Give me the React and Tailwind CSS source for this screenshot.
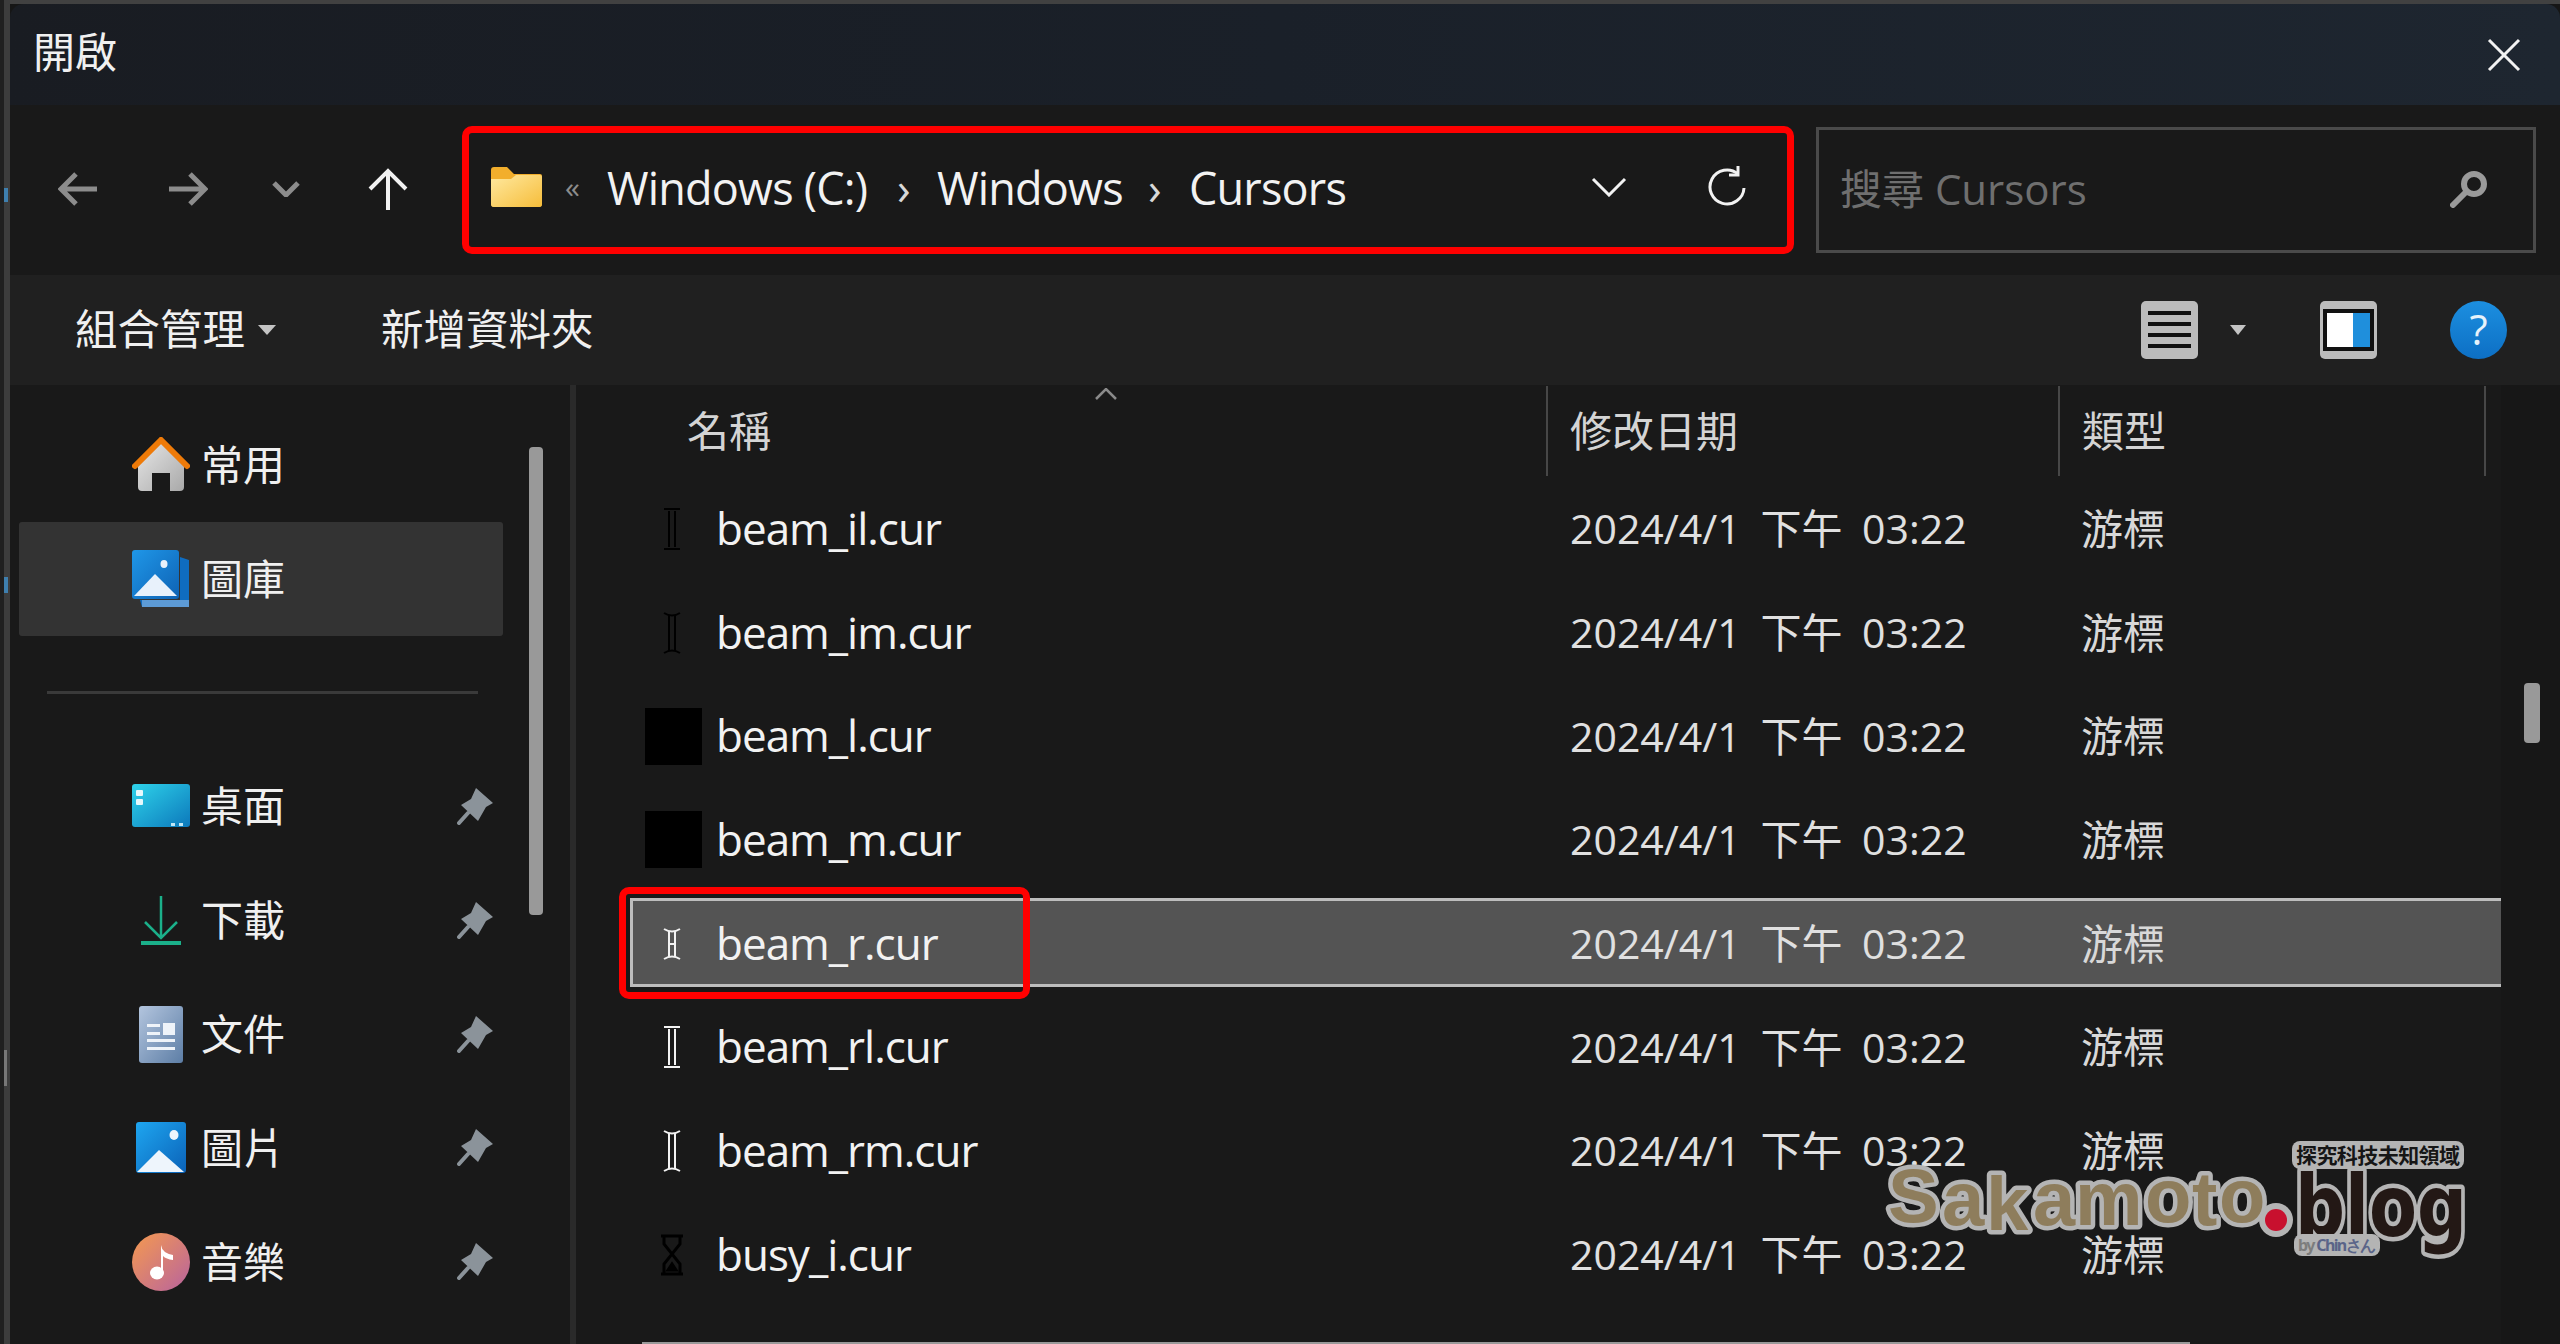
import React from 'react';

const FONT = "[font-family:'Open_Sans','Noto_Sans_CJK_TC',sans-serif]";

const files = [
  { name: 'beam_il.cur', cursor: 'il' },
  { name: 'beam_im.cur', cursor: 'im' },
  { name: 'beam_l.cur', cursor: 'box' },
  { name: 'beam_m.cur', cursor: 'box' },
  { name: 'beam_r.cur', cursor: 'r', selected: true },
  { name: 'beam_rl.cur', cursor: 'rl' },
  { name: 'beam_rm.cur', cursor: 'rm' },
  { name: 'busy_i.cur', cursor: 'busy' },
];

const Pin = () => (
  <svg width="37" height="37" viewBox="0 0 37 37" className="ml-auto mr-[9px]">
    <path d="M19 0 L36 15 L29 19 L21 33 L4 17 L14 11 Z" fill="#8b939a" strokeLinejoin="round" />
    <path d="M11 25 L2 35" stroke="#8b939a" strokeWidth="4" strokeLinecap="round" />
  </svg>
);

const HomeIcon = () => (
  <svg width="58" height="56" viewBox="0 0 58 56">
    <defs>
      <linearGradient id="homeBody" x1="0" y1="0" x2="1" y2="1">
        <stop offset="0" stopColor="#e6e6e6" />
        <stop offset="1" stopColor="#a9a9a9" />
      </linearGradient>
    </defs>
    <path d="M6 28 L29 6 L52 28 V50 Q52 54 48 54 H38 V36 H20 V54 H10 Q6 54 6 50 Z" fill="url(#homeBody)" />
    <path d="M3 29 L29 3 L55 29" fill="none" stroke="#ee7a08" strokeWidth="6" strokeLinejoin="round" strokeLinecap="round" />
  </svg>
);

const LibraryIcon = () => (
  <svg width="58" height="58" viewBox="0 0 58 58">
    <defs>
      <linearGradient id="libBlue" x1="0" y1="0" x2="1" y2="1">
        <stop offset="0" stopColor="#1f97e8" />
        <stop offset="1" stopColor="#0e62b4" />
      </linearGradient>
    </defs>
    <path d="M48 7 L57 10 V57 H10 L8 50 H48 Z" fill="#0f6cc0" />
    <path d="M10 50 H57 V57 H10 Z" fill="#5d9bd6" />
    <rect x="0" y="0" width="47" height="49" rx="3" fill="url(#libBlue)" />
    <path d="M2 46 L23 24 L45 46 Z" fill="#e8f1fb" />
    <ellipse cx="32" cy="14" rx="3.5" ry="4" fill="#e8f1fb" />
  </svg>
);

const DesktopIcon = () => (
  <svg width="58" height="44" viewBox="0 0 58 44">
    <defs>
      <linearGradient id="deskBlue" x1="0" y1="0" x2="1" y2="1">
        <stop offset="0" stopColor="#2ed3ea" />
        <stop offset="1" stopColor="#0c78bb" />
      </linearGradient>
    </defs>
    <rect width="58" height="43" rx="3" fill="url(#deskBlue)" />
    <rect x="4" y="6" width="7" height="6" rx="1" fill="#e6f8fc" />
    <rect x="4" y="15" width="7" height="6" rx="1" fill="#e6f8fc" />
    <rect x="39" y="39" width="4" height="3" fill="#bfe6f5" />
    <rect x="47" y="39" width="4" height="3" fill="#bfe6f5" />
  </svg>
);

const DownloadIcon = () => (
  <svg width="58" height="50" viewBox="0 0 58 50">
    <path d="M29 1 V43 M13 27 L29 43 L45 27" fill="none" stroke="#1bb08a" strokeWidth="2.5" />
    <rect x="9" y="46" width="40" height="4" fill="#1bb08a" />
  </svg>
);

const DocumentIcon = () => (
  <svg width="58" height="57" viewBox="0 0 58 57">
    <defs>
      <linearGradient id="docBlue" x1="0" y1="0" x2="1" y2="1">
        <stop offset="0" stopColor="#b3c5de" />
        <stop offset="1" stopColor="#5d7ea6" />
      </linearGradient>
    </defs>
    <rect x="7" y="0" width="44" height="57" rx="3" fill="url(#docBlue)" />
    <path d="M15 18 H28 V21 H15 Z M15 26 H28 V29 H15 Z M15 33 H43 V36 H15 Z M15 41 H43 V44 H15 Z" fill="#eef3f9" />
    <rect x="31" y="17" width="12" height="12" fill="#eef3f9" />
  </svg>
);

const PicturesIcon = () => (
  <svg width="58" height="51" viewBox="0 0 58 51">
    <defs>
      <linearGradient id="picBlue" x1="0" y1="0" x2="1" y2="1">
        <stop offset="0" stopColor="#1ea6f0" />
        <stop offset="1" stopColor="#0b62b8" />
      </linearGradient>
    </defs>
    <rect x="4" y="0" width="50" height="51" rx="3" fill="url(#picBlue)" />
    <path d="M5 50 L27 28 L52 50 Z" fill="#eef5fc" />
    <ellipse cx="42" cy="13" rx="4.5" ry="5" fill="#eef5fc" />
  </svg>
);

const MusicIcon = () => (
  <svg width="58" height="58" viewBox="0 0 58 58">
    <defs>
      <linearGradient id="musicFill" x1="0" y1="0" x2="1" y2="1">
        <stop offset="0" stopColor="#f59a4f" />
        <stop offset="1" stopColor="#b8639e" />
      </linearGradient>
    </defs>
    <circle cx="29" cy="29" r="29" fill="url(#musicFill)" />
    <ellipse cx="25" cy="40" rx="7" ry="6.5" fill="#fff" />
    <path d="M29 40 V12 Q30 20 41 22 V27 Q34 26 31 23 V40 Z" fill="#fff" />
  </svg>
);

const sidebarTop = [
  { label: '常用', icon: <HomeIcon /> },
  { label: '圖庫', icon: <LibraryIcon />, active: true },
];

const sidebarPinned = [
  { label: '桌面', icon: <DesktopIcon /> },
  { label: '下載', icon: <DownloadIcon /> },
  { label: '文件', icon: <DocumentIcon /> },
  { label: '圖片', icon: <PicturesIcon /> },
  { label: '音樂', icon: <MusicIcon /> },
];

const NavRow = ({ label, icon, active, pinned }) => (
  <div className={`flex items-center h-[113.8px] mx-[9px] pl-[113px] w-[484px] rounded-[3px] ${active ? 'bg-[#333333]' : ''}`}>
    <span className="flex w-[58px] justify-center">{icon}</span>
    <span className="ml-[11px] text-[42px] leading-none text-[#f0f0f0]">{label}</span>
    {pinned && <Pin />}
  </div>
);

// the .cur previews: mostly black glyphs on the dark list, white outlined for the r set
const CursorIcon = ({ kind }) => {
  if (kind === 'box') return <div className="w-[57px] h-[57px] bg-black" />;
  if (kind === 'busy') {
    return (
      <svg className="mr-[4px]" width="24" height="42" viewBox="0 0 24 42" fill="none" stroke="#000" strokeWidth="3">
        <path d="M1 2 H23 M1 40 H23 M4 2 V10 L20 30 V40 M20 2 V10 L4 30 V40" />
        <path d="M8 36 L12 30 L16 36 Z" fill="#000" />
      </svg>
    );
  }
  const light = kind === 'r' || kind === 'rl' || kind === 'rm';
  const color = light ? '#f2f2f2' : '#000';
  const small = kind === 'r';
  const h = small ? 34 : 44;
  const round = kind === 'im' || kind === 'rm' || kind === 'r';
  return (
    <svg className="mr-[4px]" width="20" height={h} viewBox={`0 0 20 ${h}`} fill="none" stroke={color} strokeWidth="2">
      <path d={`M2 2 ${round ? 'Q10 7 18 2' : 'H18'} M2 ${h - 2} ${round ? `Q10 ${h - 7} 18 ${h - 2}` : `H18`}`} />
      <path d={`M7 4 V${h - 4} M13 4 V${h - 4}`} />
      {small && <path d="M7 17 H13" />}
    </svg>
  );
};

const FileRow = ({ file }) => (
  <div className="relative flex items-center h-[103.7px] text-[42px]">
    {file.selected && (
      <>
        <div className="absolute left-[54px] right-0 top-[6px] bottom-[8px] bg-[#545454] border-[3px] border-[#bdbdbd] border-r-0" />
        <div className="absolute left-[43px] top-[-5px] w-[411px] h-[112px] border-[7px] border-[#f00] rounded-[10px]" />
      </>
    )}
    <div className="relative flex items-center w-[994px] pl-[69px]">
      <span className="flex w-[57px] justify-center">
        <CursorIcon kind={file.cursor} />
      </span>
      <span className="ml-[14px] pb-[2px] text-[44px] tracking-[-1px] leading-none text-[#f2f2f2]">{file.name}</span>
    </div>
    <div className="relative w-[512px] text-[41px] [word-spacing:9px] text-[#e0e0e0] leading-none">2024/4/1 下午 03:22</div>
    <div className="relative -ml-px text-[#d8d8d8] leading-none">游標</div>
  </div>
);

const Watermark = () => (
  <svg width="620" height="140" viewBox="0 0 620 140" className="absolute left-[1870px] top-[1130px]">
    <g style={{ paintOrder: 'stroke' }} strokeLinejoin="round">
      <text
        x="18 72 116 163 205 275 322 349"
        y="92 95 100 95 95 92 95 92"
        fontFamily="Liberation Sans"
        fontWeight="700"
        fontSize="76"
        fill="#8e7d5c"
        stroke="#b4b4b4"
        strokeWidth="9"
      >
        Sakamoto
      </text>
      <circle cx="406" cy="90" r="17" fill="#b4b4b4" />
      <circle cx="406" cy="90" r="11" fill="#c8102e" />
      <text x="425" y="106" fontFamily="DejaVu Sans" fontWeight="700" fontSize="86" textLength="172" lengthAdjust="spacingAndGlyphs" fill="#231815" stroke="#b4b4b4" strokeWidth="9">
        blog
      </text>
      <rect x="422" y="11" width="172" height="28" rx="8" fill="#b4b4b4" />
      <text x="426" y="33" fontFamily="Noto Sans CJK TC" fontWeight="700" fontSize="21" textLength="164" fill="#161616">
        探究科技未知領域
      </text>
      <rect x="424" y="104" width="86" height="22" rx="8" fill="#b4b4b4" />
      <text x="428" y="121" fontFamily="Noto Sans" fontWeight="700" fontSize="16" textLength="78" fill="#5a6488">
        <tspan fill="#7d7d7d">by </tspan>Chinさん
      </text>
    </g>
  </svg>
);

export default function App() {
  return (
    <div className={`relative flex w-[2560px] h-[1344px] overflow-hidden bg-[#161616] ${FONT}`}>
      {/* sliver of the window behind */}
      <div className="w-[4px] bg-[#202020]" />
      <div className="w-[6px] bg-[#3d3d3d]">
        <div className="mt-[188px] h-[14px] w-[4px] bg-[#3f7fae]" />
        <div className="mt-[375px] h-[16px] w-[4px] bg-[#3f7fae]" />
        <div className="mt-[457px] h-[36px] w-[3px] bg-[#777777]" />
      </div>

      <div className="flex flex-col flex-1 min-w-0">
        <div className="h-[4px] bg-[#414141]" />
        {/* title bar */}
        <div className="flex items-center justify-between h-[101px] pl-[23px] pr-[39px] rounded-t-[14px] bg-gradient-to-r from-[#191c22] via-[#1a2029] to-[#1e2630]">
          <span className="pb-[6px] text-[42px] leading-none text-[#f0f0f0]">開啟</span>
          <svg width="34" height="34" viewBox="0 0 34 34" stroke="#f2f2f2" strokeWidth="3">
            <path d="M2 2 L32 32 M32 2 L2 32" />
          </svg>
        </div>

        {/* address row */}
        <div className="flex items-center h-[170px] bg-[#191919]">
          <div className="flex items-center w-[452px] pb-[2px]">
            <svg className="ml-[48px]" width="40" height="34" viewBox="0 0 40 34" fill="none" stroke="#8c8c8c" strokeWidth="5">
              <path d="M39 17 H4 M18 2 L3 17 L18 32" />
            </svg>
            <svg className="ml-[70px]" width="40" height="34" viewBox="0 0 40 34" fill="none" stroke="#8c8c8c" strokeWidth="5">
              <path d="M1 17 H36 M22 2 L37 17 L22 32" />
            </svg>
            <svg className="ml-[64px]" width="28" height="16" viewBox="0 0 28 16" fill="none" stroke="#8c8c8c" strokeWidth="5">
              <path d="M2 2 L14 14 L26 2" />
            </svg>
            <svg className="ml-[68px]" width="40" height="42" viewBox="0 0 40 42" fill="none" stroke="#f2f2f2" strokeWidth="4">
              <path d="M20 42 V3 M2 21 L20 3 L38 21" />
            </svg>
          </div>
          <div className="flex items-center w-[1332px] h-[128px] pb-[6px] border-[7px] border-[#f00] rounded-[10px] text-[45px] tracking-[-0.8px] text-[#f2f2f2] leading-none">
            <svg className="ml-[22px]" width="51" height="40" viewBox="0 0 51 40">
              <defs>
                <linearGradient id="folderFill" x1="0" y1="0" x2="1" y2="1">
                  <stop offset="0" stopColor="#ffe9a0" />
                  <stop offset="1" stopColor="#f6bd3a" />
                </linearGradient>
              </defs>
              <path d="M0 3 Q0 0 3 0 H16 L23 7 H49 Q51 7 51 9 V37 Q51 40 48 40 H3 Q0 40 0 37 Z" fill="#f2ae2c" />
              <path d="M0 12 H20 L25 8 H49 Q51 8 51 10 V37 Q51 40 48 40 H3 Q0 40 0 37 Z" fill="url(#folderFill)" />
            </svg>
            <span className="ml-[23px] w-[42px] text-[30px] text-[#8c8c8c]">«</span>
            <span className="w-[290px]">Windows (C:)</span>
            <span className="w-[40px] text-[#d8d8d8]">›</span>
            <span className="w-[211px]">Windows</span>
            <span className="w-[41px] text-[#d8d8d8]">›</span>
            <span className="w-[402px]">Cursors</span>
            <svg width="36" height="20" viewBox="0 0 36 20" fill="none" stroke="#f2f2f2" strokeWidth="3">
              <path d="M2 2 L18 18 L34 2" />
            </svg>
            <svg className="ml-[80px]" width="42" height="42" viewBox="0 0 42 42" fill="none" stroke="#f2f2f2" strokeWidth="3">
              <path d="M31 8 A17 17 0 1 0 37 22" />
              <path d="M31 0 V9 H22" />
            </svg>
          </div>
          <div className="flex items-center justify-between ml-[22px] w-[720px] h-[126px] border-[3px] border-[#4a4a4a] pb-[3px] pl-[21px] pr-[45px]">
            <span className="text-[42px] leading-none text-[#6f6f6f]">搜尋 Cursors</span>
            <svg width="38" height="38" viewBox="0 0 38 38" fill="none">
              <circle cx="24" cy="14" r="10" stroke="#9a9a9a" strokeWidth="6" />
              <path d="M16 22 L3 35" stroke="#9a9a9a" strokeWidth="6" strokeLinecap="round" />
            </svg>
          </div>
        </div>

        {/* toolbar */}
        <div className="flex items-center h-[110px] bg-[#202020] text-[42.5px] text-[#f0f0f0] leading-none">
          <span className="ml-[65px] pb-[2px]">組合管理</span>
          <span className="ml-[13px] w-0 h-0 border-x-[9px] border-x-transparent border-t-[10px] border-t-[#c4c4c4]" />
          <span className="ml-[105px] pb-[2px]">新增資料夾</span>
          <svg className="ml-[1547.5px]" width="57" height="58" viewBox="0 0 57 58">
            <rect width="57" height="58" rx="5" fill="#bcbcbc" />
            <path d="M7 12 H50 M7 23 H50 M7 34 H50 M7 45 H50" stroke="#111" strokeWidth="4" />
          </svg>
          <span className="ml-[32px] w-0 h-0 border-x-[8px] border-x-transparent border-t-[10px] border-t-[#c4c4c4]" />
          <svg className="ml-[74px]" width="57" height="58" viewBox="0 0 57 58">
            <rect width="57" height="58" rx="5" fill="#bcbcbc" />
            <rect x="3" y="8" width="51" height="42" fill="#111" />
            <rect x="7" y="12" width="26" height="34" fill="#ffffff" />
            <rect x="33" y="12" width="17" height="34" fill="#1f8fdc" />
          </svg>
          <svg className="ml-[73px]" width="57" height="58" viewBox="0 0 57 58">
            <defs>
              <linearGradient id="helpBlue" x1="0" y1="0" x2="0" y2="1">
                <stop offset="0" stopColor="#1c8fe0" />
                <stop offset="1" stopColor="#0d6fc4" />
              </linearGradient>
            </defs>
            <ellipse cx="28.5" cy="29" rx="28.5" ry="29" fill="url(#helpBlue)" />
            <text x="28.5" y="44" textAnchor="middle" fontFamily="Open Sans" fontSize="42" fill="#e6f2fb">?</text>
          </svg>
        </div>

        {/* body */}
        <div className="flex flex-1 min-h-0">
          <aside className="flex w-[560px] bg-[#191919]">
            <nav className="w-[519px] pt-[23px]">
              {sidebarTop.map((item) => (
                <NavRow key={item.label} {...item} />
              ))}
              <div className="flex items-center h-[114px]">
                <div className="ml-[37px] w-[431px] h-[3px] bg-[#3a3a3a]" />
              </div>
              {sidebarPinned.map((item) => (
                <NavRow key={item.label} {...item} pinned />
              ))}
            </nav>
            <div className="mt-[62px] w-[14px] h-[468px] rounded-[4px] bg-[#999999]" />
          </aside>
          <div className="w-[6px] bg-[#2a2a2a]" />

          <main className="relative flex flex-col w-[1925px] bg-[#191919] min-h-0">
            <div className="relative flex items-center h-[92px] text-[42px] leading-none text-[#d4d4d4]">
              <div className="w-[970px] pl-[111px]">名稱</div>
              <svg className="absolute left-[519px] top-[3px]" width="22" height="12" viewBox="0 0 22 12" fill="none" stroke="#8a8a8a" strokeWidth="2.5">
                <path d="M1 11 L11 1 L21 11" />
              </svg>
              <div className="flex items-center w-[512px] h-[90px] border-l-2 border-[#474747] pl-[22px]">修改日期</div>
              <div className="flex items-center w-[428px] h-[90px] border-x-2 border-[#474747] pl-[22px]">類型</div>
            </div>
            {files.map((file) => (
              <FileRow key={file.name} file={file} />
            ))}
            <div className="mt-auto ml-[66px] w-[1548px] h-[2px] bg-[#999999]" />
          </main>

          <div className="flex-1 bg-[#171717]">
            <div className="mt-[298px] ml-[23px] w-[16px] h-[60px] rounded-[4px] bg-[#999999]" />
          </div>
        </div>
      </div>

      <Watermark />
    </div>
  );
}
